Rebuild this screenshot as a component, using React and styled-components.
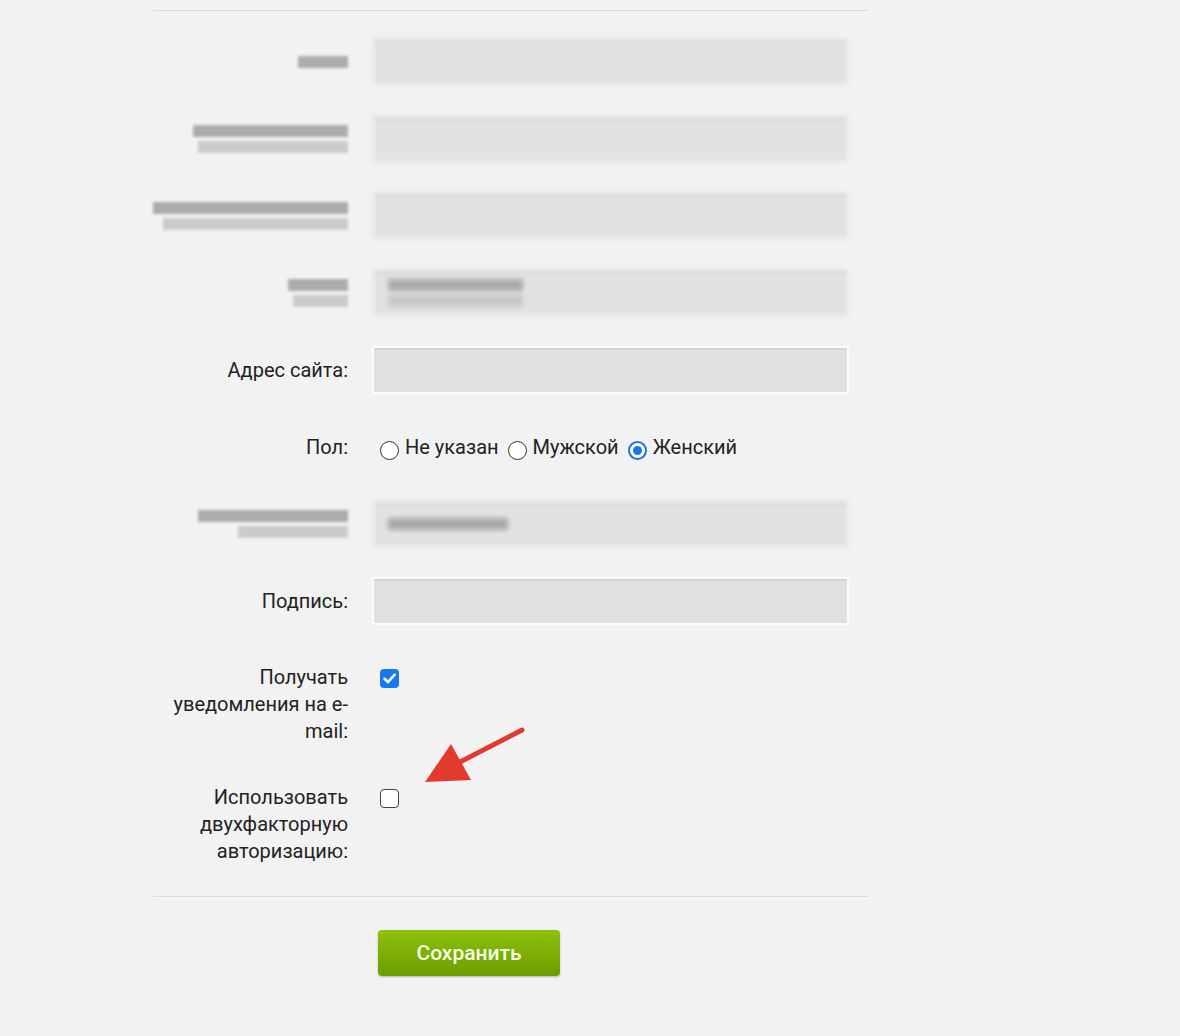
import React from 'react';
import styled, { createGlobalStyle } from 'styled-components';

const GlobalStyle = createGlobalStyle`
  html, body {
    margin: 0;
    background: #f2f2f2;
    font-family: Roboto, "Liberation Sans", Arial, sans-serif;
  }
`;

const Page = styled.div`
  width: 715px;
  margin-left: 153px;
  padding-top: 10px;
  padding-bottom: 60px;
`;

const Rule = styled.div`
  height: 1px;
  background: #dcdcdc;
`;

const Form = styled.div`
  display: flex;
  flex-direction: column;
  gap: 29px;
  padding: 27px 0 31px;
`;

const Row = styled.div`
  display: grid;
  grid-template-columns: 195px 477px;
  column-gap: 24px;
  align-items: ${(p) => (p.$top ? 'start' : 'center')};
  min-height: 48px;
  padding-top: ${(p) => (p.$top ? '10px' : '0')};
`;

const Label = styled.div`
  text-align: right;
  font-size: 20px;
  line-height: 27px;
  color: #222;
  display: flex;
  justify-content: flex-end;
  flex-direction: column;
  align-items: flex-end;
`;

const Cell = styled.div`
  position: relative;
  display: flex;
  align-items: center;
`;

const Input = styled.div`
  box-sizing: border-box;
  width: 477px;
  height: 48px;
  background: #e0e0e0;
  border: 2px solid #fbfbfb;
  box-shadow: inset 0 2px 0 #d2d2d2;
  display: flex;
  align-items: center;
  padding-left: 14px;
  filter: ${(p) => (p.$blur ? 'blur(2px)' : 'none')};
  ${(p) => p.$blur && 'border-color: #ececec; background: #e2e2e2;'}
`;

const Smudge = styled.div`
  width: ${(p) => p.$w}px;
  height: ${(p) => p.$h || 12}px;
  background: ${(p) => p.$c || '#a8a8a8'};
  filter: blur(1.5px);
  opacity: 0.85;
`;

const SmudgeLines = styled.div`
  display: flex;
  flex-direction: column;
  align-items: flex-end;
  gap: 4px;
`;

const Options = styled.div`
  display: flex;
  align-items: center;
  padding-left: 8px;
  font-size: 20px;
  color: #222;
`;

const Option = styled.label`
  display: flex;
  align-items: center;
  gap: 6px;
  margin-right: 9px;
`;

const Radio = styled.span`
  box-sizing: border-box;
  width: 19px;
  height: 19px;
  border-radius: 50%;
  margin-top: 6px;
  background: #fff;
  border: ${(p) => (p.$on ? '2px solid #1a73e8' : '1.5px solid #333')};
  display: flex;
  align-items: center;
  justify-content: center;
  &::after {
    content: '';
    display: ${(p) => (p.$on ? 'block' : 'none')};
    width: 9px;
    height: 9px;
    border-radius: 50%;
    background: #1a73e8;
  }
`;

const Check = styled.span`
  box-sizing: border-box;
  margin: 5px 0 0 8px;
  width: 19px;
  height: 19px;
  border-radius: 4px;
  background: ${(p) => (p.$on ? '#1877f2' : '#fff')};
  border: ${(p) => (p.$on ? 'none' : '1.5px solid #444')};
  display: flex;
  align-items: center;
  justify-content: center;
`;

const Arrow = styled.svg`
  position: absolute;
  left: 48px;
  top: -62px;
`;

const Actions = styled.div`
  padding: 33px 0 0 225px;
`;

const SaveButton = styled.button`
  width: 182px;
  height: 46px;
  border: none;
  border-radius: 4px;
  background: linear-gradient(#8fc10b, #6b9d00);
  box-shadow: 0 1px 2px rgba(0, 0, 0, 0.25);
  color: #f3ffe6;
  font-family: Roboto, "Liberation Sans", Arial, sans-serif;
  font-size: 21px;
  font-weight: 500;
  cursor: pointer;
`;

const Blurred = ({ lines }) => (
  <SmudgeLines>
    {lines.map((w, i) => (
      <Smudge key={i} $w={w} $c={i ? '#c4c4c4' : '#a0a0a0'} />
    ))}
  </SmudgeLines>
);

export default function App() {
  return (
    <>
      <GlobalStyle />
      <Page>
        <Rule />
        <Form>
          <Row>
            <Label><Blurred lines={[50]} /></Label>
            <Cell><Input $blur /></Cell>
          </Row>
          <Row>
            <Label><Blurred lines={[155, 150]} /></Label>
            <Cell><Input $blur /></Cell>
          </Row>
          <Row>
            <Label><Blurred lines={[195, 185]} /></Label>
            <Cell><Input $blur /></Cell>
          </Row>
          <Row>
            <Label><Blurred lines={[60, 55]} /></Label>
            <Cell>
              <Input $blur>
                <Blurred lines={[135, 135]} />
              </Input>
            </Cell>
          </Row>
          <Row>
            <Label>Адрес сайта:</Label>
            <Cell><Input /></Cell>
          </Row>
          <Row>
            <Label>Пол:</Label>
            <Cell>
              <Options>
                <Option><Radio />Не указан</Option>
                <Option><Radio />Мужской</Option>
                <Option><Radio $on />Женский</Option>
              </Options>
            </Cell>
          </Row>
          <Row>
            <Label><Blurred lines={[150, 110]} /></Label>
            <Cell>
              <Input $blur>
                <Blurred lines={[120]} />
              </Input>
            </Cell>
          </Row>
          <Row>
            <Label>Подпись:</Label>
            <Cell><Input /></Cell>
          </Row>
          <Row $top>
            <Label>
              <span>Получать</span>
              <span>уведомления на e-</span>
              <span>mail:</span>
            </Label>
            <Cell>
              <Check $on>
                <svg width="13" height="11" viewBox="0 0 13 11">
                  <path d="M1.5 5.8 L5 9 L11.5 1.8" fill="none" stroke="#fff" strokeWidth="2.6" strokeLinecap="round" strokeLinejoin="round" />
                </svg>
              </Check>
            </Cell>
          </Row>
          <Row $top>
            <Label>
              <span>Использовать</span>
              <span>двухфакторную</span>
              <span>авторизацию:</span>
            </Label>
            <Cell>
              <Check />
              <Arrow width="110" height="66" viewBox="0 0 110 66">
                <line x1="40" y1="40" x2="102" y2="8" stroke="#e23b2e" strokeWidth="5" strokeLinecap="round" />
                <polygon points="5,60 31,22 51,58" fill="#e23b2e" />
              </Arrow>
            </Cell>
          </Row>
        </Form>
        <Rule />
        <Actions>
          <SaveButton>Сохранить</SaveButton>
        </Actions>
      </Page>
    </>
  );
}
